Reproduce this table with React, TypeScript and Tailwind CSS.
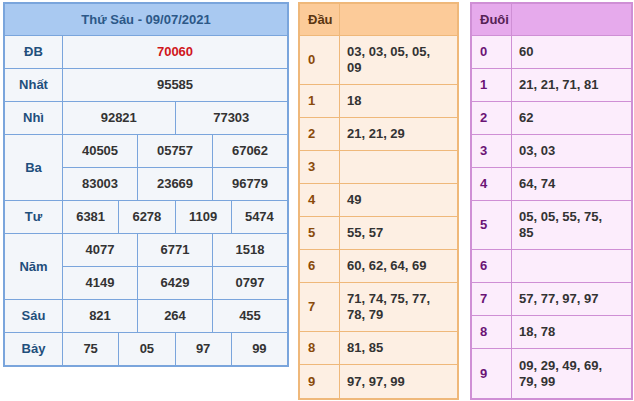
import React from "react";

const F = { fontFamily: '"Liberation Sans", Arial, sans-serif' };

type Row = { label: string; lines: string[][]; red?: boolean };

const rows: Row[] = [
  { label: "ĐB", lines: [["70060"]], red: true },
  { label: "Nhất", lines: [["95585"]] },
  { label: "Nhì", lines: [["92821", "77303"]] },
  { label: "Ba", lines: [["40505", "05757", "67062"], ["83003", "23669", "96779"]] },
  { label: "Tư", lines: [["6381", "6278", "1109", "5474"]] },
  { label: "Năm", lines: [["4077", "6771", "1518"], ["4149", "6429", "0797"]] },
  { label: "Sáu", lines: [["821", "264", "455"]] },
  { label: "Bảy", lines: [["75", "05", "97", "99"]] },
];

const dau: [string, string, boolean][] = [
  ["0", "03, 03, 05, 05, 09", true],
  ["1", "18", false],
  ["2", "21, 21, 29", false],
  ["3", "", false],
  ["4", "49", false],
  ["5", "55, 57", false],
  ["6", "60, 62, 64, 69", false],
  ["7", "71, 74, 75, 77, 78, 79", true],
  ["8", "81, 85", false],
  ["9", "97, 97, 99", false],
];

const duoi: [string, string, boolean][] = [
  ["0", "60", false],
  ["1", "21, 21, 71, 81", false],
  ["2", "62", false],
  ["3", "03, 03", false],
  ["4", "64, 74", false],
  ["5", "05, 05, 55, 75, 85", true],
  ["6", "", false],
  ["7", "57, 77, 97, 97", false],
  ["8", "18, 78", false],
  ["9", "09, 29, 49, 69, 79, 99", true],
];

function Main() {
  return (
    <div className="w-[286px] border-2 border-[#7aa5dc] bg-[#f3f6fa] text-[13px] font-bold leading-[16px]">
      <div className="h-[32px] flex items-center justify-center bg-[#a9c9f1] border-b border-[#7aa5dc] text-[#2c5888]">
        Thứ Sáu - 09/07/2021
      </div>
      {rows.map((r, ri) => (
        <div key={r.label} className={`flex ${ri < rows.length - 1 ? "border-b border-[#7aa5dc]" : ""}`}>
          <div className="w-[58px] shrink-0 flex items-center justify-center border-r border-[#7aa5dc] text-[#1f4f7c]">
            {r.label}
          </div>
          <div className="flex-1 flex flex-col">
            {r.lines.map((line, li) => (
              <div
                key={li}
                className={`flex ${li < r.lines.length - 1 ? "h-[33px] border-b border-[#7aa5dc]" : "h-[32px]"}`}
              >
                {line.map((v, vi) => (
                  <div
                    key={vi}
                    className={`flex-1 flex items-center justify-center ${vi < line.length - 1 ? "border-r border-[#7aa5dc]" : ""} ${r.red ? "text-[#d0161b]" : "text-[#333333]"}`}
                  >
                    {v}
                  </div>
                ))}
              </div>
            ))}
          </div>
        </div>
      ))}
    </div>
  );
}

function Side({
  title,
  data,
  width,
  border,
  head,
  bg,
  labelColor,
  headColor,
}: {
  title: string;
  data: [string, string, boolean][];
  width: string;
  border: string;
  head: string;
  bg: string;
  labelColor: string;
  headColor: string;
}) {
  return (
    <div className={`${width} border-2 ${border} ${bg} text-[13px] font-bold leading-[16px]`}>
      <div className={`flex h-[32px] ${head} border-b ${border}`}>
        <div className={`w-[40px] shrink-0 flex items-center pl-[8px] border-r ${border} ${headColor}`}>{title}</div>
        <div className="flex-1" />
      </div>
      {data.map(([k, v, tall], i) => (
        <div
          key={k}
          className={`flex ${tall ? "h-[49px]" : "h-[33px]"} ${i < data.length - 1 ? `border-b ${border}` : ""}`}
        >
          <div className={`w-[40px] shrink-0 flex items-center pl-[8px] border-r ${border} ${labelColor}`}>{k}</div>
          <div className="flex-1 flex items-center pl-[7px] pr-[20px] text-[#333333]">{v}</div>
        </div>
      ))}
    </div>
  );
}

export default function App() {
  return (
    <div style={F} className="w-[634px] h-[401px] bg-white flex items-start pl-[3px] pt-[2px]">
      <Main />
      <div className="ml-[9px]">
        <Side
          title="Đầu"
          data={dau}
          width="w-[161px]"
          border="border-[#efb87a]"
          head="bg-[#fccb99]"
          bg="bg-[#fdefe3]"
          labelColor="text-[#8a4a0a]"
          headColor="text-[#5a3510]"
        />
      </div>
      <div className="ml-[11px]">
        <Side
          title="Đuôi"
          data={duoi}
          width="w-[163px]"
          border="border-[#cf8fd5]"
          head="bg-[#e6aaec]"
          bg="bg-[#fcedfc]"
          labelColor="text-[#6b1475]"
          headColor="text-[#552255]"
        />
      </div>
    </div>
  );
}
